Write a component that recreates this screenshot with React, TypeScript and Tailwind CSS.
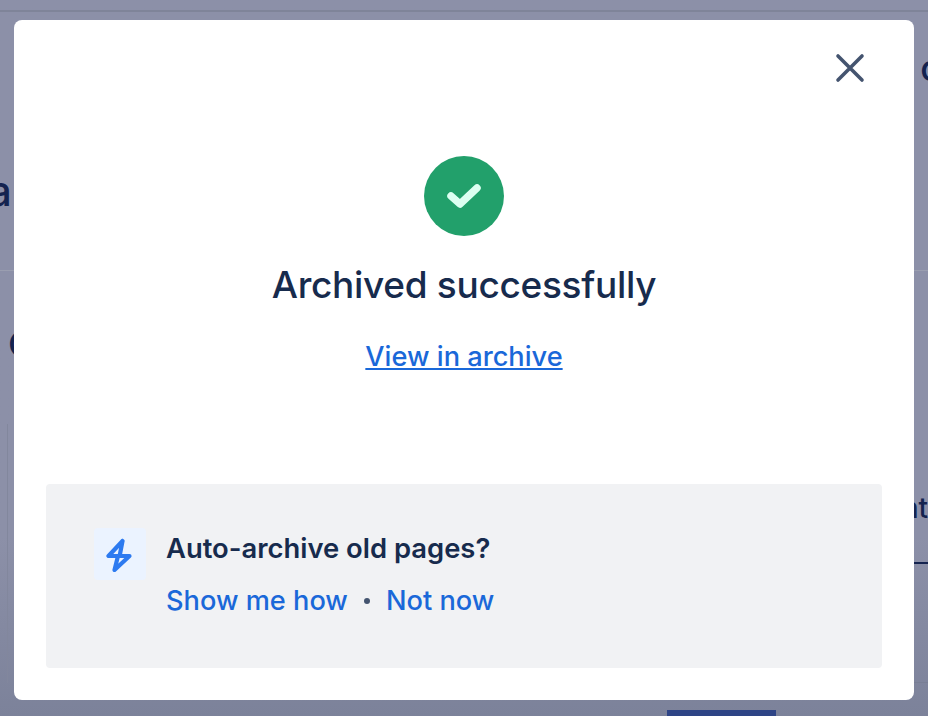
const links = 'text-[#1a68d9]';

function BackgroundPage() {
  return (
    <div className="flex h-[716px] w-[928px] flex-col overflow-hidden bg-gradient-to-b from-[#8c90a8] from-75% to-[#7c829a] text-[#14234f]">
      <div className="h-[12px] shrink-0 border-b-2 border-[#7f8499]" />
      <div className="flex h-[259px] shrink-0 items-start justify-between border-b border-[#9a9eb0]">
        <span className="-ml-[12px] mt-[152px] text-[42px] leading-[54px] font-medium">a</span>
        <span className="-mr-[13px] mt-[32px] text-[36px] leading-[48px] font-medium">c</span>
      </div>
      <div className="flex h-[412px] shrink-0 justify-between border-b-0">
        <div className="flex w-[40px] flex-col pl-[7px]">
          <span className="ml-[1px] mt-[49px] text-[36px] leading-[48px] font-medium">C</span>
          <div className="mt-[56px] flex-1 border-l border-[#82879d]" />
        </div>
        <div className="flex w-[14px] flex-col">
          <div className="mt-[217px] flex h-[76px] items-center justify-end overflow-hidden border-b-2 border-[#14234f] pb-[34px]">
            <span className="text-[28px] leading-[36px] font-medium">nt</span>
          </div>
          <div className="mt-[118px] h-px bg-[#797f95]" />
        </div>
      </div>
      <div className="flex flex-1 items-end pl-[667px]">
        <div className="h-[6px] w-[109px] bg-[#2e4486]" />
      </div>
    </div>
  );
}

export default function App() {
  return (
    <div className="relative h-[716px] w-[928px] overflow-hidden font-['Inter',sans-serif]">
      <BackgroundPage />
      {/* modal sits over the page */}
      <div className="absolute inset-0 px-[14px] pt-[20px]">
        <div className="relative flex h-[680px] flex-col items-center rounded-[8px] bg-white px-[32px] pb-[32px]">
          <button className="absolute right-[48px] top-[32px] text-[#44546f]" aria-label="Close">
            <svg width="32" height="32" viewBox="0 0 32 32" fill="none" stroke="currentColor" strokeWidth="3.6" strokeLinecap="round">
              <path d="M4 4 L28 28 M28 4 L4 28" />
            </svg>
          </button>

          <div className="mt-[136px] flex h-[80px] w-[80px] items-center justify-center rounded-full bg-[#22a06b]">
            <svg width="34" height="26" viewBox="0 0 34 26" fill="none" stroke="#dcfff1" strokeWidth="7.5" strokeLinecap="round" strokeLinejoin="round">
              <path d="M4 13 L13 21 L30 5" />
            </svg>
          </div>

          <h1 className="mt-[26px] text-[37px] leading-[46px] font-medium tracking-[-0.3px] text-[#172b4d]">Archived successfully</h1>
          <a className={`mt-[31px] text-[27.2px] leading-[36px] font-medium underline ${links}`}>View in archive</a>

          <div className="mt-auto flex h-[184px] w-full items-start rounded-[4px] bg-[#f1f2f4] pl-[48px] pt-[44px]">
            <div className="flex h-[52px] w-[52px] items-center justify-center rounded-[4px] bg-[#ebf3ff]">
              <svg width="32" height="36" viewBox="1.5 -1 32 36" fill="none" stroke="#2c7af0" strokeWidth="4.2" strokeLinejoin="round" strokeLinecap="round">
                <path d="M20 4 L6 19 H27 L12 33 L15 21 M20 4 L17.5 17" />
              </svg>
            </div>
            <div className="ml-[20px] flex flex-col">
              <p className="text-[27.4px] leading-[40px] font-semibold text-[#172b4d]">Auto-archive old pages?</p>
              <div className="mt-[13px] flex items-center text-[27.2px] leading-[40px]">
                <a className={`font-medium ${links}`}>Show me how</a>
                <span className="mx-[16px] h-[6px] w-[6px] rounded-full bg-[#44546f]" />
                <a className={`font-medium ${links}`}>Not now</a>
              </div>
            </div>
          </div>
        </div>
      </div>
    </div>
  );
}
